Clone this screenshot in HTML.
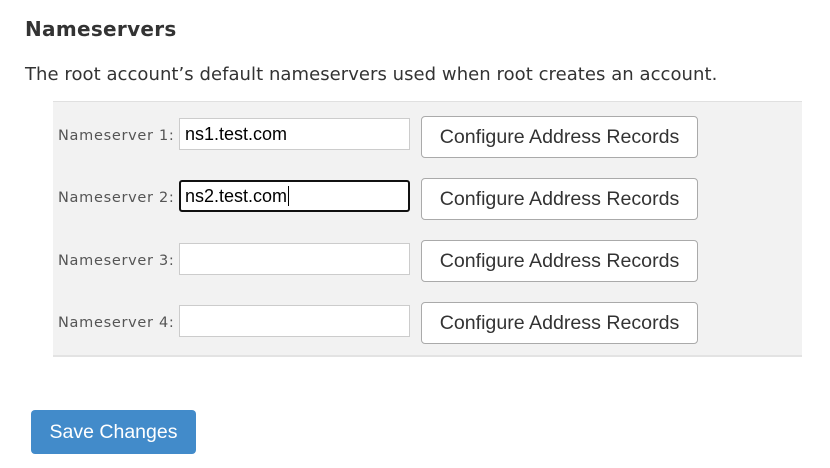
<!DOCTYPE html>
<html><head><style>
body{margin:0;width:830px;height:468px;background:#fff;position:relative;font-family:"DejaVu Sans","Liberation Sans",sans-serif;overflow:hidden}
.a{position:absolute}
h1{position:absolute;left:25px;top:17px;margin:0;font-size:20px;font-weight:bold;color:#333;letter-spacing:0.3px}
.desc{left:25px;top:64px;font-size:18px;color:#333;letter-spacing:0.05px;white-space:nowrap}
.panel{left:53px;top:101px;width:749px;height:253px;background:#f2f2f2;border-top:1px solid #e0e0e0;border-bottom:2px solid #e3e3e3}
.lbl{left:58px;font-size:14.5px;color:#555;white-space:nowrap;letter-spacing:0.7px}
.inp{left:179px;width:231px;height:32px;background:#fff;border:1px solid #ccc;box-sizing:border-box;font-family:"Liberation Sans",sans-serif;font-size:18px;color:#000;padding-left:5px;line-height:30px}
.btn{left:421px;width:277px;height:42px;background:#fff;border:1px solid #aaa;border-radius:4px;box-sizing:border-box;font-family:"Liberation Sans",sans-serif;font-size:19.6px;color:#333;text-align:center;line-height:40px}
.save{left:31px;top:410px;width:165px;height:44px;background:#428bca;border-radius:4px;color:#fff;font-family:"Liberation Sans",sans-serif;font-size:19.5px;text-align:center;line-height:44px}
</style></head><body>
<h1>Nameservers</h1>
<div class="a desc">The root account’s default nameservers used when root creates an account.</div>
<div class="a panel"></div>
<div class="a lbl" style="top:128px">Nameserver 1:</div>
<div class="a inp" style="top:118px">ns1.test.com</div>
<div class="a btn" style="top:116px">Configure Address Records</div>
<div class="a lbl" style="top:190px">Nameserver 2:</div>
<div class="a inp" style="top:180px;border:2px solid #111;border-radius:3px;padding-left:4px;line-height:28px">ns2.test.com<span style="border-left:1px solid #000;margin-left:1px"></span></div>
<div class="a btn" style="top:178px">Configure Address Records</div>
<div class="a lbl" style="top:253px">Nameserver 3:</div>
<div class="a inp" style="top:243px"></div>
<div class="a btn" style="top:240px">Configure Address Records</div>
<div class="a lbl" style="top:315px">Nameserver 4:</div>
<div class="a inp" style="top:305px"></div>
<div class="a btn" style="top:302px">Configure Address Records</div>
<div class="a save">Save Changes</div>
</body></html>
